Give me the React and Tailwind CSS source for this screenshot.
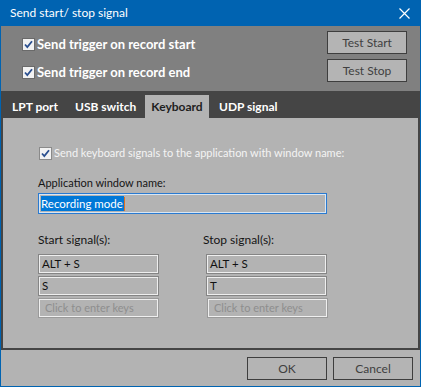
import React from "react";

function Check({ light }) {
  return (
    <div
      className={`w-[13px] h-[13px] border ${light ? "border-[#8a8a8a]" : "border-[#6a6a6a]"} bg-[#f2f2f2] flex items-center justify-center shrink-0`}
    >
      <svg width="11" height="11" viewBox="0 0 11 11">
        <path d="M2 5.5 L4.3 8 L9 2.2" stroke="#2a4f8f" strokeWidth="1.8" fill="none" />
      </svg>
    </div>
  );
}

function Field({ children, placeholder, shift }) {
  return (
    <div
      className={`w-[121px] h-[20px] border ${placeholder ? "border-[#9a9a9a] pl-[6px] text-[#8e8e8e] text-[11px]" : "border-[#858585] pl-[3px] text-[#111] text-[11.5px]"} shadow-[inset_0_0_0_1px_#efefef] flex items-center ${shift ? "ml-[1px]" : ""}`}
    >
      {children}
    </div>
  );
}

function Btn({ children }) {
  return (
    <div className="w-[80px] h-[23px] border border-[#3e3e3e] bg-[#b4b4b4] flex items-center justify-center text-[12px] text-[#404040]">
      {children}
    </div>
  );
}

export default function App() {
  return (
    <div className="font-[Lato,sans-serif] w-[421px] h-[387px] bg-[#0063b1] px-[1px] pb-[1px] flex flex-col overflow-hidden">
      {/* Title bar */}
      <div className="h-[26px] flex items-center justify-between pl-[9px] pr-[10px] text-white text-[12px]">
        <span className="leading-none">Send start/ stop signal</span>
        <svg width="11" height="11" viewBox="0 0 11 11">
          <path d="M0.5 0.5 L10.5 10.5 M10.5 0.5 L0.5 10.5" stroke="#fff" strokeWidth="1.2" />
        </svg>
      </div>

      {/* Top area */}
      <div className="h-[65px] bg-[#808080] flex justify-between pl-[21px] pr-[13px]">
        <div className="flex flex-col pt-[7px] gap-[5px]">
          <div className="h-[23px] flex items-center gap-[2px]">
            <Check />
            <span className="text-white font-bold text-[13px]">Send trigger on record start</span>
          </div>
          <div className="h-[23px] flex items-center gap-[2px]">
            <Check />
            <span className="text-white font-bold text-[13px]">Send trigger on record end</span>
          </div>
        </div>
        <div className="flex flex-col pt-[5px] gap-[5px]">
          <Btn>Test Start</Btn>
          <Btn>Test Stop</Btn>
        </div>
      </div>

      {/* Tab frame */}
      <div className="h-[259px] bg-[#454545] flex flex-col px-[2px] pb-[2px]">
        <div className="h-[27px] flex items-end text-[12px] font-bold text-white">
          <div className="h-[23px] flex items-center pl-[9px] w-[63px]">LPT port</div>
          <div className="h-[23px] flex items-center pl-[9px] w-[79px]">USB switch</div>
          <div className="h-[23px] w-[64px] bg-[#b3b3b3] flex items-center justify-center text-[#1e1e1e]">
            Keyboard
          </div>
          <div className="h-[23px] flex items-center pl-[10px]">UDP signal</div>
        </div>
        <div className="flex-1 bg-[#b3b3b3] pl-[35px] pt-[29px] text-[12px]">
          <div className="h-[13px] flex items-center gap-[2px] pl-[1px]">
            <Check light />
            <span className="text-[#f4f4f4] text-[11px]">Send keyboard signals to the application with window name:</span>
          </div>
          <div className="mt-[15px] h-[16px] flex items-center text-[#151515] text-[11px]">Application window name:</div>
          <div className="mt-[2px] w-[289px] h-[21px] border border-[#2a7ad0] shadow-[inset_0_0_0_1px_#d8e6f4] flex items-center pl-[2px]">
            <span className="bg-[#0078d7] text-white text-[11.5px] leading-[15px] pr-[1px]">Recording mode</span>
            <span className="w-[1px] h-[14px] bg-[#e07020]" />
          </div>
          <div className="mt-[18px] flex">
            <div className="w-[165px] flex flex-col">
              <div className="h-[16px] flex items-center text-[#151515]">Start signal(s):</div>
              <div className="mt-[6px] flex flex-col gap-[2px]">
                <Field>ALT + S</Field>
                <Field>S</Field>
                <Field placeholder>Click to enter keys</Field>
              </div>
            </div>
            <div className="flex flex-col">
              <div className="h-[16px] flex items-center text-[#151515]">Stop signal(s):</div>
              <div className="mt-[6px] flex flex-col gap-[2px] pl-[3px]">
                <Field>ALT + S</Field>
                <Field>T</Field>
                <Field placeholder shift>Click to enter keys</Field>
              </div>
            </div>
          </div>
        </div>
      </div>

      {/* Bottom */}
      <div className="flex-1 bg-[#b3b3b3] flex items-start justify-end gap-[6px] pt-[7px] pr-[7px]">
        <Btn>OK</Btn>
        <Btn>Cancel</Btn>
      </div>
    </div>
  );
}
